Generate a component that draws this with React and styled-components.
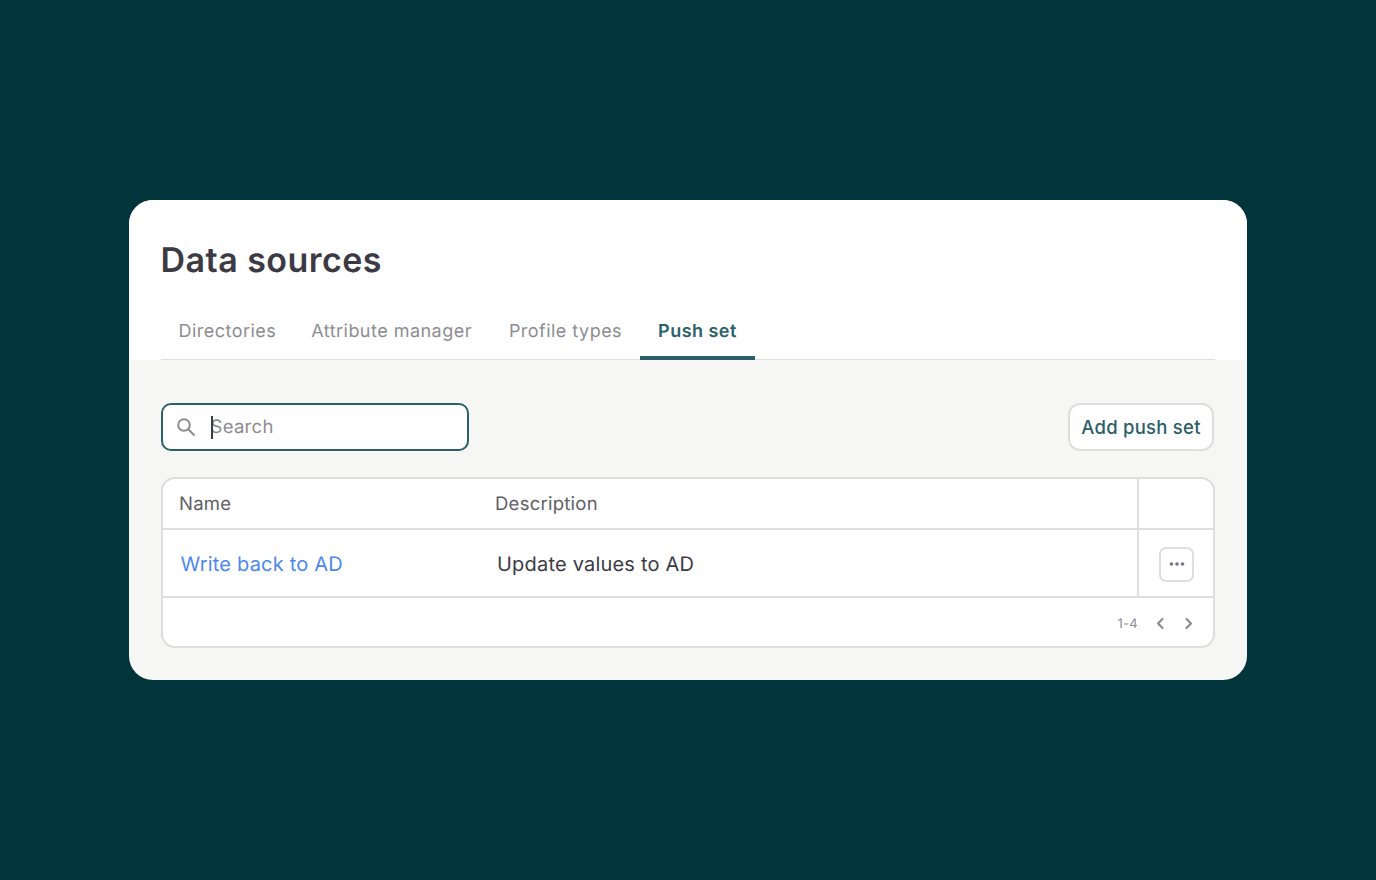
import React from "react";
import styled, { createGlobalStyle } from "styled-components";

const GlobalStyle = createGlobalStyle`
  * { box-sizing: border-box; }
  html, body { margin: 0; height: 100%; }
  body {
    background: #02343b;
    font-family: Inter, "Liberation Sans", sans-serif;
    text-rendering: geometricPrecision;
  }
`;

const Page = styled.div`
  width: 100%;
  height: 880px;
  padding-top: 200px;
  display: flex;
  justify-content: center;
  align-items: flex-start;
`;

const Card = styled.main`
  width: 1118px;
  height: 480px;
  border-radius: 24px;
  overflow: hidden;
  background: #f6f6f4;
  display: flex;
  flex-direction: column;
`;

const Header = styled.header`
  height: 160px;
  background: #fff;
  padding: 0 32px;
  display: flex;
  flex-direction: column;
`;

const Title = styled.h1`
  margin: 0 0 0 -0.5px;
  padding-top: 39px;
  height: 112px;
  font-size: 34px;
  line-height: 44px;
  font-weight: 600;
  color: #3c3a45;
  letter-spacing: 0.47px;
`;

const Tabs = styled.nav`
  height: 48px;
  display: flex;
  border-bottom: 1.5px solid #dededf;
`;

const Tab = styled.a`
  height: 48px;
  padding: 0 18px 7px;
  display: flex;
  align-items: center;
  font-size: 18px;
  letter-spacing: 0.47px;
  font-weight: ${(p) => (p.$active ? 600 : 400)};
  color: ${(p) => (p.$active ? "#2b6068" : "#8d8d91")};
  border-bottom: 4px solid ${(p) => (p.$active ? "#2b6068" : "transparent")};

  &:first-child {
    padding-left: 17.5px;
    padding-right: 17px;
  }
  &:nth-child(2) {
    padding-right: 19px;
  }
  span {
    position: relative;
    top: 0.5px;
  }
`;

const Content = styled.section`
  flex: 1;
  padding: 43px 32px 0;
  display: flex;
  flex-direction: column;
  gap: 26px;
`;

const Toolbar = styled.div`
  display: flex;
  justify-content: space-between;
  align-items: center;
`;

const SearchBox = styled.label`
  width: 308px;
  height: 48px;
  padding: 0 13px;
  display: flex;
  align-items: center;
  gap: 15px;
  background: #fff;
  border: 2px solid #2b6068;
  border-radius: 10px;
`;

const Caret = styled.i`
  width: 1.5px;
  height: 23px;
  margin-right: -17px;
  background: #3c3a45;
  position: relative;
`;

const SearchText = styled.span`
  font-size: 18.5px;
  letter-spacing: 0.3px;
  color: #8d8d91;
`;

const AddButton = styled.button`
  width: 146px;
  height: 48px;
  margin-right: 1px;
  padding: 0;
  background: #fff;
  border: 2px solid #dededf;
  border-radius: 12px;
  font-family: inherit;
  font-size: 18.5px;
  letter-spacing: 0.25px;
  font-weight: 500;
  color: #2b6068;
`;

const Table = styled.div`
  width: 1054px;
  height: 171px;
  background: #fff;
  border: 2px solid #dededf;
  border-radius: 14px;
  overflow: hidden;
`;

const Row = styled.div`
  display: grid;
  grid-template-columns: 976px 1fr;
  height: ${(p) => p.$height}px;
  border-bottom: 2px solid #dededf;
`;

const MainCell = styled.div`
  display: flex;
  align-items: center;
  border-right: 2px solid #dededf;
`;

const ActionCell = styled.div`
  padding-left: 1px;
  display: flex;
  align-items: center;
  justify-content: center;
`;

const HeadText = styled.span`
  width: 332px;
  padding-left: 16px;
  font-size: 18.5px;
  letter-spacing: 0.25px;
  font-weight: 400;
  color: #5e5e66;
`;

const HeadDesc = styled(HeadText)`
  padding-left: 0;
`;

const NameLink = styled.a`
  width: 334px;
  margin-top: 2px;
  padding-left: 17.5px;
  font-size: 20px;
  letter-spacing: 0.2px;
  color: #4c87f0;
`;

const Description = styled.span`
  margin-top: 2px;
  font-size: 20px;
  letter-spacing: 0.2px;
  color: #3c3a45;
`;

const MoreButton = styled.button`
  width: 35px;
  height: 35px;
  margin-top: 2px;
  padding: 0;
  display: flex;
  align-items: center;
  justify-content: center;
  background: #fff;
  border: 2px solid #dededf;
  border-radius: 7px;
`;

const Pager = styled.div`
  height: 48px;
  padding: 2px 15px 0 0;
  display: flex;
  justify-content: flex-end;
  align-items: center;
  gap: 9px;
  color: #8d8d91;
`;

const PagerText = styled.span`
  margin: 1px 4px 0 0;
  font-size: 13px;
  letter-spacing: 0.3px;
`;

const SearchIcon = () => (
  <svg width="20" height="20" viewBox="0 0 20 20" fill="none" stroke="#8d8d91" strokeWidth="2" strokeLinecap="round">
    <circle cx="8" cy="8" r="5.8" />
    <path d="M12.3 12.3L18 18" />
  </svg>
);

const Chevron = ({ flip }) => (
  <svg width="19" height="19" viewBox="0 0 19 19" fill="none" stroke="#85858b" strokeWidth="2" strokeLinecap="round" strokeLinejoin="round">
    <path d={flip ? "M7.5 5l4.5 4.5-4.5 4.5" : "M11.5 5L7 9.5l4.5 4.5"} />
  </svg>
);

const Dots = () => (
  <svg width="16" height="4" viewBox="0 0 16 4" fill="#77757f">
    <circle cx="2.5" cy="2" r="1.8" />
    <circle cx="8" cy="2" r="1.8" />
    <circle cx="13.5" cy="2" r="1.8" />
  </svg>
);

const App = () => (
  <Page>
    <GlobalStyle />
    <Card>
      <Header>
        <Title>Data sources</Title>
        <Tabs>
          <Tab><span>Directories</span></Tab>
          <Tab><span>Attribute manager</span></Tab>
          <Tab><span>Profile types</span></Tab>
          <Tab $active><span>Push set</span></Tab>
        </Tabs>
      </Header>
      <Content>
        <Toolbar>
          <SearchBox>
            <SearchIcon />
            <Caret />
            <SearchText>Search</SearchText>
          </SearchBox>
          <AddButton>Add push set</AddButton>
        </Toolbar>
        <Table>
          <Row $height={51}>
            <MainCell>
              <HeadText>Name</HeadText>
              <HeadDesc>Description</HeadDesc>
            </MainCell>
            <ActionCell />
          </Row>
          <Row $height={68}>
            <MainCell>
              <NameLink>Write back to AD</NameLink>
              <Description>Update values to AD</Description>
            </MainCell>
            <ActionCell>
              <MoreButton><Dots /></MoreButton>
            </ActionCell>
          </Row>
          <Pager>
            <PagerText>1-4</PagerText>
            <Chevron />
            <Chevron flip />
          </Pager>
        </Table>
      </Content>
    </Card>
  </Page>
);

export default App;
